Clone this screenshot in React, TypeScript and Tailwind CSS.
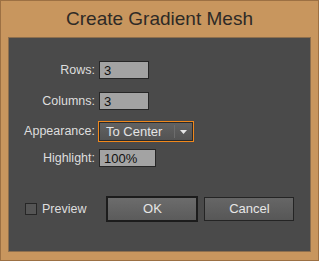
import React from 'react';

const labelCls = 'text-right text-[12.5px] text-[#dedede] leading-none';
const fieldCls =
  'h-[18px] bg-[#a3a3a3] border border-[#262626] px-[4px] flex items-center text-[13px] text-[#111] leading-none';

export default function App() {
  return (
    <div
      className="w-[319px] h-[261px] bg-[#c8965e] border border-[#9c7043] flex flex-col"
      style={{ fontFamily: '"Liberation Sans", Arial, sans-serif' }}
    >
      {/* Title */}
      <div className="h-[36px] pt-[1px] flex items-center justify-center text-[19px] text-[#2e2a26]">
        Create Gradient Mesh
      </div>

      {/* Dark panel */}
      <div className="mx-[7px] h-[215px] border border-[#8d6f4e] bg-[#4a4a4a] flex flex-col">
        <div className="pt-[23px] grid grid-cols-[86px_auto] gap-x-[4px] items-center">
          <div className={labelCls}>Rows:</div>
          <div className={`${fieldCls} w-[50px]`}>3</div>

          <div className={`${labelCls} mt-[13px]`}>Columns:</div>
          <div className={`${fieldCls} w-[50px] mt-[13px]`}>3</div>

          <div className={`${labelCls} mt-[11px]`}>Appearance:</div>
          <div className="mt-[11px] -ml-[1px] w-[96px] h-[21px] border border-[#f0881c] p-0">
            <div className="h-full border border-[#2a2a2a] bg-gradient-to-b from-[#626262] to-[#535353] flex items-center">
              <span className="flex-1 pl-[6px] text-[13px] text-[#e4e4e4] leading-none">To Center</span>
              <span className="w-px h-[13px] bg-[#3a3a3a] border-r border-[#6c6c6c]" />
              <span className="w-[17px] flex justify-center">
                <svg width="7" height="4" viewBox="0 0 7 4">
                  <path d="M0 0H7L3.5 4Z" fill="#e6e6e6" />
                </svg>
              </span>
            </div>
          </div>

          <div className={`${labelCls} mt-[7px]`}>Highlight:</div>
          <div className={`${fieldCls} w-[57px] mt-[7px]`}>100%</div>
        </div>

        <div className="mt-[29px] flex items-center">
          <div className="ml-[16px] w-[12px] h-[12px] border border-[#262626] bg-[#555]" />
          <span className="ml-[5px] text-[12.5px] text-[#dedede] leading-none">Preview</span>
          <button className="ml-[20px] w-[92px] h-[26px] border-2 border-[#1c1c1c] bg-gradient-to-b from-[#6c6c6c] to-[#5b5b5b] text-[13px] text-[#e6e6e6]">
            OK
          </button>
          <button className="ml-[6px] w-[90px] h-[24px] border border-[#242424] bg-gradient-to-b from-[#666] to-[#575757] text-[13px] text-[#e6e6e6]">
            Cancel
          </button>
        </div>
      </div>
    </div>
  );
}
